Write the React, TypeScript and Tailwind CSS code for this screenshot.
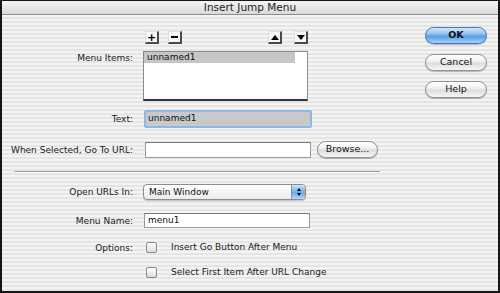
import React from "react";

const font = { fontFamily: '"DejaVu Sans", "Liberation Sans", sans-serif' };

function SquareButton({ children, className = "" }: { children: React.ReactNode; className?: string }) {
  return (
    <div
      className={`w-[14px] h-[13px] flex items-center justify-center bg-[#f7f7f7] border-t border-l border-t-[#e0e0e0] border-l-[#e0e0e0] border-r-2 border-b-2 border-r-[#4a4a4a] border-b-[#4a4a4a] ${className}`}
    >
      {children}
    </div>
  );
}

function PillButton({ label, primary = false, className = "" }: { label: string; primary?: boolean; className?: string }) {
  return (
    <div
      className={`h-[17px] rounded-full flex items-center justify-center text-[9.5px] text-[#111] border shadow-[0_1px_1px_rgba(0,0,0,0.25)] ${
        primary
          ? "border-[#4a76ad] bg-[image:linear-gradient(180deg,#d3e8fb_0%,#8ec1f0_40%,#5d9de4_55%,#9fd0fb_100%)] font-bold"
          : "border-[#8e8e8e] bg-[image:linear-gradient(180deg,#ffffff_0%,#f1f1f1_40%,#dcdcdc_55%,#f7f7f7_100%)]"
      } ${className}`}
    >
      {label}
    </div>
  );
}

function Label({ children, className = "" }: { children: React.ReactNode; className?: string }) {
  return <div className={`w-[131px] text-right text-[9px] text-[#1a1a1a] leading-[12px] shrink-0 ${className}`}>{children}</div>;
}

function Checkbox() {
  return (
    <div className="w-[11px] h-[11px] rounded-[2px] border border-[#8a8a8a] bg-[image:linear-gradient(180deg,#ffffff,#dcdcdc)] shrink-0" />
  );
}

export default function App() {
  return (
    <div
      style={font}
      className="w-[500px] h-[293px] flex flex-col border-t border-x-2 border-b-2 border-[#161616] bg-[#eeeeee] overflow-hidden"
    >
      <div className="h-[14px] shrink-0 flex items-center justify-center border-b border-[#8c8c8c] bg-[image:linear-gradient(180deg,#f4f4f4,#dadada)] text-[10.5px] text-[#222]">
        Insert Jump Menu
      </div>

      <div className="flex-1 flex bg-[image:repeating-linear-gradient(180deg,#f4f4f4_0px,#f4f4f4_2px,#e5e5e5_2px,#e5e5e5_4px)]">
        <div className="flex-1 flex flex-col">
          {/* add/remove/move */}
          <div className="mt-[16px] h-[13px] flex">
            <div className="w-[131px] shrink-0" />
            <div className="ml-[10px] flex">
              <SquareButton className="ml-[2px]">
                <span className="text-[11px] font-bold leading-none text-black">+</span>
              </SquareButton>
              <SquareButton className="ml-[9px]">
                <span className="w-[7px] h-[2px] bg-black" />
              </SquareButton>
              <SquareButton className="ml-[86px]">
                <span className="w-0 h-0 border-x-[4px] border-x-transparent border-b-[5px] border-b-black" />
              </SquareButton>
              <SquareButton className="ml-[12px]">
                <span className="w-0 h-0 border-x-[4px] border-x-transparent border-t-[5px] border-t-black" />
              </SquareButton>
            </div>
          </div>

          {/* menu items */}
          <div className="mt-[7px] flex">
            <Label className="pt-[1px]">Menu Items:</Label>
            <div className="ml-[10px] w-[165px] h-[50px] bg-white border border-[#8a8a8a] border-b-2 border-b-[#333] flex">
              <div className="w-[151px]">
                <div className="h-[11px] bg-[#c6c6c6] pl-[3px] text-[9px] leading-[11px] text-[#111]">unnamed1</div>
              </div>
              <div className="flex-1 bg-white" />
            </div>
          </div>

          {/* text */}
          <div className="mt-[9px] h-[18px] flex items-center">
            <Label>Text:</Label>
            <div className="ml-[11px] w-[168px] h-[18px] border-2 border-[#8db7e4] rounded-[2px] bg-[#c9c9c9] flex items-center pl-[2px] text-[9px] text-[#111]">
              unnamed1
            </div>
          </div>

          {/* url */}
          <div className="mt-[13px] h-[17px] flex items-center">
            <Label>When Selected, Go To URL:</Label>
            <div className="ml-[12px] w-[166px] h-[16px] bg-white border border-[#9a9a9a] border-t-[#777]" />
            <PillButton label="Browse..." className="ml-[6px] w-[61px]" />
          </div>

          {/* separator */}
          <div className="mt-[13px] ml-[12px] w-[366px] h-[2px] border-t border-[#9c9c9c] border-b border-b-white" />

          {/* open urls in */}
          <div className="mt-[11px] h-[16px] flex items-center">
            <Label>Open URLs In:</Label>
            <div className="ml-[10px] w-[163px] h-[16px] rounded-[4px] border border-[#8c8c8c] bg-[image:linear-gradient(180deg,#ffffff,#ececec)] flex shadow-[0_1px_1px_rgba(0,0,0,0.2)]">
              <div className="flex-1 pl-[5px] text-[9px] leading-[14px] text-[#111]">Main Window</div>
              <div className="w-[14px] rounded-r-[3px] border-l border-[#6e95c4] bg-[image:linear-gradient(180deg,#cfe5fb,#6aa6e6_55%,#b6dafb)] flex flex-col items-center justify-center gap-[2px]">
                <span className="w-0 h-0 border-x-[2.5px] border-x-transparent border-b-[3px] border-b-black" />
                <span className="w-0 h-0 border-x-[2.5px] border-x-transparent border-t-[3px] border-t-black" />
              </div>
            </div>
          </div>

          {/* menu name */}
          <div className="mt-[13px] h-[15px] flex items-center">
            <Label>Menu Name:</Label>
            <div className="ml-[11px] w-[166px] h-[15px] bg-white border border-[#9a9a9a] border-t-[#777] pl-[3px] text-[9px] leading-[13px] text-[#111]">
              menu1
            </div>
          </div>

          {/* options */}
          <div className="mt-[12px] h-[15px] flex items-center">
            <Label>Options:</Label>
            <div className="ml-[13px] flex items-center">
              <Checkbox />
              <span className="ml-[14px] text-[9px] text-[#1a1a1a]">Insert Go Button After Menu</span>
            </div>
          </div>
          <div className="mt-[10px] h-[15px] flex items-center">
            <div className="w-[131px] shrink-0" />
            <div className="ml-[13px] flex items-center">
              <Checkbox />
              <span className="ml-[14px] text-[9px] text-[#1a1a1a]">Select First Item After URL Change</span>
            </div>
          </div>
        </div>

        <div className="w-[62px] mr-[11px] flex flex-col pt-[12px] gap-[10px]">
          <PillButton label="OK" primary />
          <PillButton label="Cancel" />
          <PillButton label="Help" />
        </div>
      </div>
    </div>
  );
}
